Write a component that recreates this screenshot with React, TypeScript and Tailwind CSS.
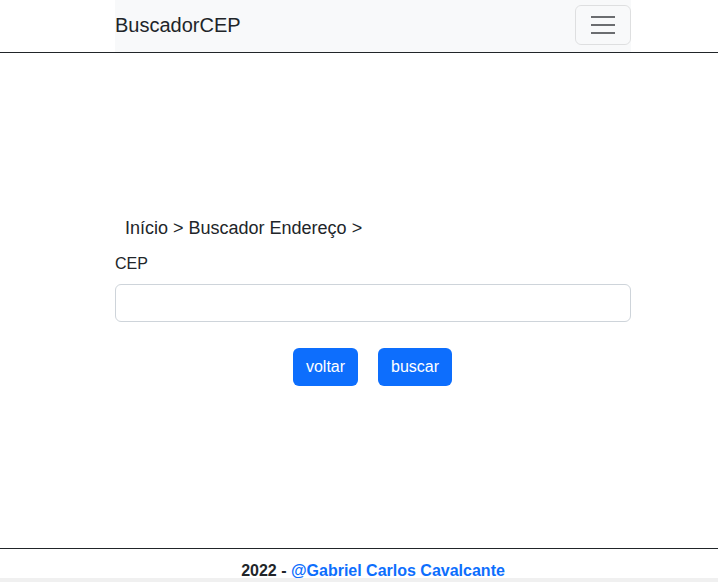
export default function App() {
  return (
    <div className="h-[582px] overflow-hidden bg-white font-['Liberation_Sans',Arial,sans-serif] text-[#212529]">
      <div className="flex h-full w-[746px] flex-col">
        <nav className="h-[53px] shrink-0 border-b border-[#212529]">
          <div className="mx-auto flex h-[52px] w-[516px] items-center justify-between bg-[#f8f9fa] pb-[2px]">
            <span className="text-[20px] leading-[30px]">BuscadorCEP</span>
            <button
              type="button"
              className="flex h-[40px] w-[56px] flex-col items-center justify-center gap-[6px] rounded-[6px] border border-black/10"
            >
              <span className="h-[2px] w-[24px] bg-[#6b6d70]" />
              <span className="h-[2px] w-[24px] bg-[#6b6d70]" />
              <span className="h-[2px] w-[24px] bg-[#6b6d70]" />
            </button>
          </div>
        </nav>

        <main className="flex-1">
          <div className="mx-auto w-[516px] pt-[162px]">
            <div className="pl-[10px] text-[18px] leading-[27px]">Início &gt; Buscador Endereço &gt;</div>
            <label className="mt-[10px] mb-[8px] block text-[16px] leading-[24px]">CEP</label>
            <input
              type="text"
              className="block h-[38px] w-full rounded-[6px] border border-[#ced4da] px-3 outline-none"
            />
            <div className="mt-[26px] flex justify-center gap-[20px] pr-[1px]">
              <button type="button" className="h-[38px] w-[65px] rounded-[6px] bg-[#0d6efd] text-[16px] text-white">
                voltar
              </button>
              <button type="button" className="h-[38px] w-[74px] rounded-[6px] bg-[#0d6efd] text-[16px] text-white">
                buscar
              </button>
            </div>
          </div>
        </main>

        <footer className="h-[34px] shrink-0 border-t border-[#212529]">
          <p className="h-[29px] overflow-hidden pt-[14px] text-center text-[16px] font-bold leading-[15px]">
            2022 - <a className="text-[#0d6efd]">@Gabriel Carlos Cavalcante</a>
          </p>
          <div className="h-[4px] bg-[#f0f0f0]" />
        </footer>
      </div>
    </div>
  );
}
